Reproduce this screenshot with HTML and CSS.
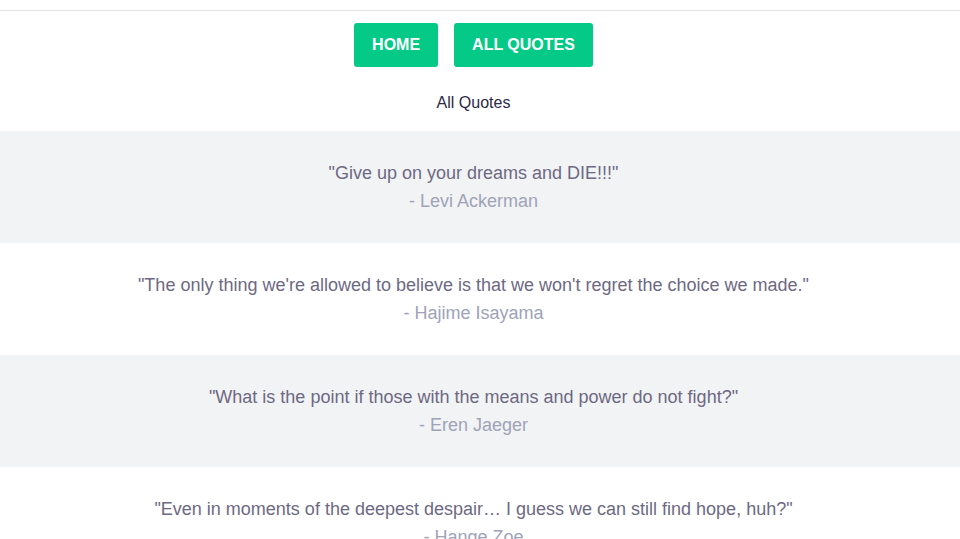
FILE: index.html
```html
<!DOCTYPE html>
<html lang="en">
<head>
    <meta charset="UTF-8">
    <meta name="viewport" content="width=device-width, initial-scale=1.0">
    <title>All Quotes</title>
    <link rel="stylesheet" href="styles.css">
</head>
<body>
    <header class="top-bar"></header>

    <nav class="nav">
        <a href="#" class="nav-btn">HOME</a>
        <a href="#" class="nav-btn">ALL QUOTES</a>
    </nav>

    <h1 class="page-title">All Quotes</h1>

    <section class="quotes">
        <div class="quote">
            <p class="quote-text">"Give up on your dreams and DIE!!!"</p>
            <p class="quote-author">- Levi Ackerman</p>
        </div>
        <div class="quote">
            <p class="quote-text">"The only thing we're allowed to believe is that we won't regret the choice we made."</p>
            <p class="quote-author">- Hajime Isayama</p>
        </div>
        <div class="quote">
            <p class="quote-text">"What is the point if those with the means and power do not fight?"</p>
            <p class="quote-author">- Eren Jaeger</p>
        </div>
        <div class="quote">
            <p class="quote-text">"Even in moments of the deepest despair… I guess we can still find hope, huh?"</p>
            <p class="quote-author">- Hange Zoe</p>
        </div>
    </section>
</body>
</html>
```

FILE: styles.css
```css
body {
    margin: 0;
    font-family: 'Liberation Sans', Arial, sans-serif;
    background: #fff;
    color: #333;
}
.top-bar {
    height: 10px;
    border-bottom: 1px solid #e2e2e2;
}
.nav {
    display: flex;
    justify-content: center;
    gap: 16px;
    margin-top: 12px;
    padding-right: 13px;
}
.nav-btn {
    display: block;
    background-color: #05c986;
    color: white;
    text-decoration: none;
    font-weight: bold;
    font-size: 16px;
    line-height: 18px;
    padding: 13px 18px;
    border-radius: 3px;
}
.page-title {
    margin: 27px 0 0;
    padding-right: 13px;
    font-size: 16px;
    font-weight: normal;
    line-height: 18px;
    text-align: center;
    color: #2c2a48;
}
.quotes {
    margin-top: 19px;
}
.quote {
    padding: 28px 33px 28px 20px;
    text-align: center;
    font-size: 18px;
    line-height: 28px;
}
.quote:nth-child(odd) {
    background-color: #f2f3f5;
}
.quote p {
    margin: 0;
}
.quote-text {
    color: #6d6983;
}
.quote-author {
    color: #a0a3b8;
}
```
